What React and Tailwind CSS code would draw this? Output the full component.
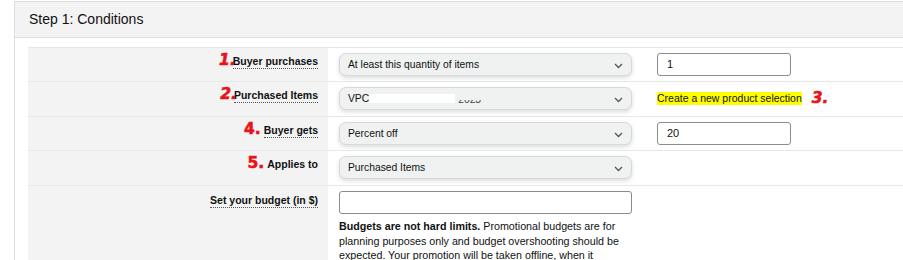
import React from 'react';

const font = { fontFamily: '"Liberation Sans", Arial, sans-serif' };
const numFont = { fontFamily: '"DejaVu Sans", sans-serif' };

function Chevron() {
  return (
    <svg width="9" height="6" viewBox="0 0 9 6" className="absolute right-[8px] top-[9px]">
      <path d="M1 1 L4.5 4.5 L8 1" fill="none" stroke="#555" strokeWidth="1.3" />
    </svg>
  );
}

function Select({ children }) {
  return (
    <div className="relative w-[293px] h-[23px] rounded-[7px] border border-[#d5d9d9] bg-[#f0f2f2] shadow-[0_2px_4px_rgba(15,17,17,0.15)] pl-[8px] text-[10.3px] leading-[21px] text-[#0f1111]">
      {children}
      <Chevron />
    </div>
  );
}

function Input({ value, w = 'w-[134px]' }) {
  return (
    <div className={`${w} h-[23px] rounded-[3px] border border-[#888c8c] bg-white pl-[9px] text-[11px] leading-[21px] text-[#0f1111]`}>
      {value}
    </div>
  );
}

function Label({ num, italic, children, underline = true }) {
  return (
    <div className="flex items-baseline justify-end leading-[13px]">
      {num && (
        <span
          className={`text-[#e8141c] font-bold leading-[10px] text-[15.5px] [-webkit-text-stroke:0.6px_#e8141c] ${italic ? 'italic mr-[-3px]' : 'mr-[3px]'}`}
          style={numFont}
        >
          {num}
        </span>
      )}
      <span
        className={`text-[10.5px] font-bold text-[#0f1111] ${underline ? 'border-b border-dotted border-[#555]' : ''}`}
      >
        {children}
      </span>
    </div>
  );
}

function Row({ label, children, extra, h, tall }) {
  return (
    <div className="flex border-b border-[#e7e7e7]">
      <div className={`w-[300px] bg-[#f3f3f3] pr-[10px] ${tall ? 'pt-[8px]' : 'pt-[7px]'} ${h}`}>{label}</div>
      <div className={`flex pl-[11px] pt-[5px] ${h}`}>
        <div>{children}</div>
        {extra && <div className="ml-[25px]">{extra}</div>}
      </div>
    </div>
  );
}

export default function App() {
  return (
    <div className="w-[903px] h-[260px] overflow-hidden bg-white" style={font}>
      <div className="ml-[14px] mt-[1px] w-[920px] border-l border-t border-[#dddddd]">
        <div className="h-[36px] bg-[#f3f3f3] border-b border-[#dddddd] pl-[14px] text-[14px] leading-[35px] text-[#111]">
          Step 1: Conditions
        </div>
        <div className="pl-[13px] pt-[9px]">
          <div className="border-t border-[#e7e7e7]">
            <Row
              h="h-[33px]"
              label={<Label num="1." italic>Buyer purchases</Label>}
              extra={<Input value="1" />}
            >
              <Select>At least this quantity of items</Select>
            </Row>
            <Row
              h="h-[34px]"
              label={<Label num="2." italic>Purchased Items</Label>}
              extra={
                <div className="flex items-center h-[23px]">
                  <span className="bg-[#ffff00] text-[10.5px] text-[#0f1111] leading-[13px]">Create a new product selection</span>
                  <span
                    className="ml-[10px] text-[15.5px] font-bold italic text-[#e8141c] [-webkit-text-stroke:0.6px_#e8141c]"
                    style={numFont}
                  >
                    3.
                  </span>
                </div>
              }
            >
              <Select>
                <span className="inline-flex items-center">
                  VPC
                  <span className="inline-block w-[86px] h-[9px] bg-white" />
                  <span className="inline-block h-[4px] overflow-hidden ml-[3px] mt-[6px] leading-none text-[#444]">
                    <span className="block mt-[-5px]">2023</span>
                  </span>
                </span>
              </Select>
            </Row>
            <Row
              h="h-[33px]"
              label={<Label num="4.">Buyer gets</Label>}
              extra={<Input value="20" />}
            >
              <Select>Percent off</Select>
            </Row>
            <Row h="h-[34px]" label={<Label num="5." underline={false}>Applies to</Label>}>
              <Select>Purchased Items</Select>
            </Row>
            <Row tall h="h-[80px]" label={<Label>Set your budget (in $)</Label>}>
              <Input w="w-[293px]" />
              <p className="w-[300px] mt-[5px] text-[10.7px] leading-[14.5px] text-[#0f1111]">
                <b>Budgets are not hard limits.</b> Promotional budgets are for planning purposes only and budget overshooting should be expected. Your promotion will be taken offline, when it
              </p>
            </Row>
          </div>
        </div>
      </div>
    </div>
  );
}
